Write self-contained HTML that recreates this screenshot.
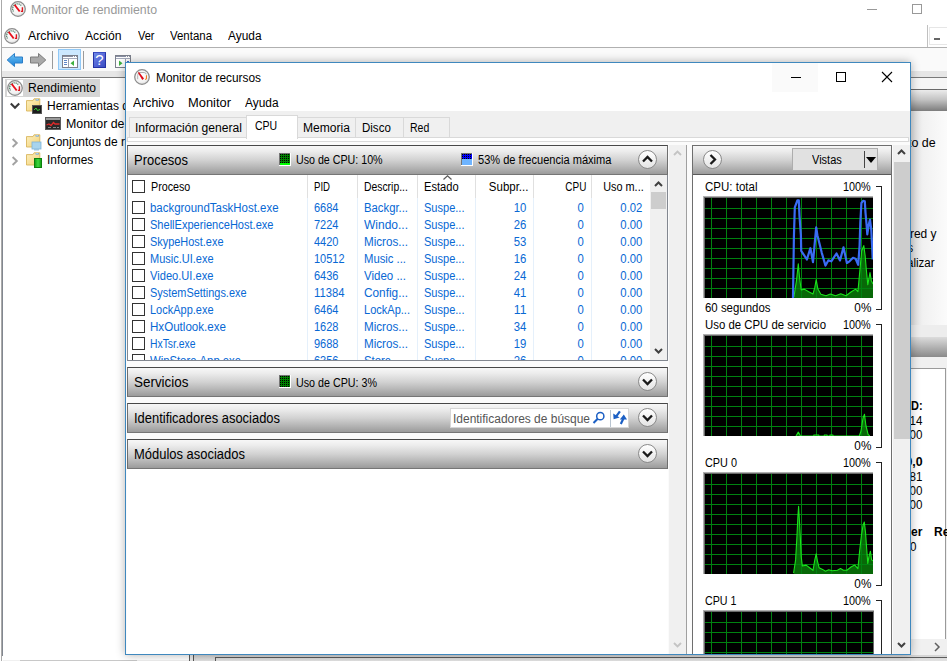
<!DOCTYPE html>
<html><head><meta charset="utf-8">
<style>
*{box-sizing:border-box;margin:0;padding:0}
html,body{width:947px;height:661px;overflow:hidden;background:#fff}
body{font-family:"Liberation Sans",sans-serif;font-size:12px;color:#000;position:relative}
.a{position:absolute}
.t{position:absolute;white-space:pre;line-height:14px;height:14px}
.hd{position:absolute;left:127px;width:541px;height:30px;border:1px solid #6e6e6e;border-top-color:#484848;border-bottom-color:#767676;
 background:linear-gradient(#f7f7f7 0%,#ededed 18%,#d2d2d2 50%,#b4b4b4 78%,#9b9b9b 100%)}
.circ{position:absolute;width:19px;height:19px;border-radius:50%;border:1px solid #8a8a8a;background:linear-gradient(#ffffff,#e4e4e4)}
.cb{position:absolute;left:132px;width:13px;height:13px;border:1px solid #333;background:#fff}
.cs{position:absolute;top:175px;width:1px}
</style></head><body>
<svg width="0" height="0" style="position:absolute"><defs>
<radialGradient id="gg" cx=".45" cy=".4" r=".6"><stop offset="0" stop-color="#fff"/><stop offset=".75" stop-color="#f2f2f2"/><stop offset="1" stop-color="#d8d8d8"/></radialGradient>
<g id="gauge"><circle cx="8" cy="8" r="7.3" fill="url(#gg)" stroke="#8c8c8c" stroke-width="1.25"/><path d="M3.45 10.5 A4.8 4.8 0 0 1 11.6 5" fill="none" stroke="#4f7d66" stroke-width="1.3" stroke-dasharray="1.1 .8"/><path d="M4.55 3.7 L9.7 10.5" stroke="#e8101c" stroke-width="1.9" fill="none"/><path d="M12.4 6.2 V10.4 H10.9" fill="none" stroke="#e0141c" stroke-width="1.4"/></g>
<g id="gaugeB"><circle cx="8" cy="8" r="7.3" fill="url(#gg)" stroke="#8c8c8c" stroke-width="1.25"/><path d="M3.7 10.2 V6.4 Q3.8 3.7 6 3.5 H10.2 Q12 3.6 12.2 5.4" fill="none" stroke="#b0b0b0" stroke-width="1"/><path d="M3.9 3.7 L5.0 3.0 L10.0 9.6 L8.3 10.9 Z" fill="#df0c18"/><path d="M12.5 6.2 L12.4 9.8 L11.2 10.6" fill="none" stroke="#f07a1c" stroke-width="1.1"/></g>
<linearGradient id="fg" x1="0" y1="0" x2="1" y2="1"><stop offset="0" stop-color="#fdf1c0"/><stop offset="1" stop-color="#f2cf74"/></linearGradient>
<linearGradient id="gn" x1="0" y1="0" x2="1" y2="0"><stop offset="0" stop-color="#0f9a0f"/><stop offset=".5" stop-color="#3fd83f"/><stop offset="1" stop-color="#0f9a0f"/></linearGradient>
<g id="folder"><path d="M.5 2.6 H7 L8 .8 H13.8 V13 H.5 Z" fill="url(#fg)" stroke="#d9b65c" stroke-width=".9"/><rect x="9.6" y="1.2" width="3.2" height="1.3" fill="#5a9be0"/><rect x="10.4" y="1.2" width="1.4" height=".7" fill="#e8f2fc"/></g>
<pattern id="dots" width="2" height="2" patternUnits="userSpaceOnUse"><rect x="1" y="1" width="1" height="1" fill="#000"/></pattern>
<linearGradient id="ab" x1="0" y1="0" x2="0" y2="1"><stop offset="0" stop-color="#6fc4f5"/><stop offset="1" stop-color="#1b7fd6"/></linearGradient>
</defs></svg>
<div class="a" style="left:0;top:0;width:947px;height:661px;background:#fff">
<div class="a" style="left:1px;top:0;width:1px;height:661px;background:#aaa"></div>
<svg class="a" style="left:10px;top:1px" width="16" height="16" viewBox="0 0 16 16"><use href="#gauge"/></svg>
<div class="t" style="top:3px;color:#999;left:31.4px;transform:scaleX(1.0266);transform-origin:0 0;">Monitor de rendimiento</div>
<div class="a" style="left:867px;top:9px;width:10px;height:1px;background:#999"></div>
<div class="a" style="left:912px;top:4px;width:10px;height:10px;border:1px solid #999"></div>
<svg class="a" style="left:4px;top:28px" width="16" height="16" viewBox="0 0 16 16"><use href="#gauge"/></svg>
<div class="t" style="top:29px;left:28px;transform:scaleX(1.0246);transform-origin:0 0;">Archivo</div>
<div class="t" style="top:29px;left:85px;transform:scaleX(1.0130);transform-origin:0 0;">Acción</div>
<div class="t" style="top:29px;left:138px;transform:scaleX(0.9159);transform-origin:0 0;">Ver</div>
<div class="t" style="top:29px;left:170px;transform:scaleX(0.9535);transform-origin:0 0;">Ventana</div>
<div class="t" style="top:29px;left:228px;transform:scaleX(0.9908);transform-origin:0 0;">Ayuda</div>
<div class="a" style="left:929px;top:27px;width:19px;height:18px;border:1px solid #e6e6e6;background:#fff"></div>
<div class="a" style="left:934px;top:38px;width:6px;height:2px;background:#666"></div>
<div class="a" style="left:2px;top:47px;width:945px;height:1px;background:#b0b0b0"></div>
<div class="a" style="left:2px;top:48px;width:945px;height:23px;background:#fafafa"></div>
<svg class="a" style="left:6px;top:52px" width="18" height="16" viewBox="0 0 18 16"><path d="M1.2 8 L8.5 1.5 V5 H16.5 V11 H8.5 V14.5 Z" fill="url(#ab)" stroke="#2c7ec8" stroke-width="1"/></svg>
<svg class="a" style="left:29px;top:52px" width="18" height="16" viewBox="0 0 18 16"><path d="M16.8 8 L9.5 1.5 V5 H1.5 V11 H9.5 V14.5 Z" fill="#a9a9a9" stroke="#7d7d7d" stroke-width="1"/></svg>
<div class="a" style="left:52px;top:51px;width:1px;height:18px;background:#9a9a9a"></div>
<div class="a" style="left:58px;top:49px;width:23px;height:21px;border:1px solid #90c8f6;background:#cce8ff"></div>
<svg class="a" style="left:62px;top:55px" width="16" height="13" viewBox="0 0 16 13" shape-rendering="crispEdges"><rect x=".5" y=".5" width="15" height="12" fill="#fff" stroke="#7c808c"/><rect x="1" y="1" width="14" height="1" fill="#8a90a4"/><rect x="11" y="1" width="1" height="1" fill="#fff"/><rect x="13" y="1" width="1" height="1" fill="#fff"/><rect x="1" y="3" width="14" height="1" fill="#a4aabc"/><rect x="2" y="5" width="3" height="1" fill="#5f86c8"/><rect x="2" y="7" width="3" height="1" fill="#5f86c8"/><rect x="2" y="9" width="3" height="1" fill="#5f86c8"/><rect x="6" y="4" width="1" height="8" fill="#9aa0b0"/><path d="M12 5.5 L8.5 8.2 L12 11 Z" fill="#3fb13f" shape-rendering="auto"/></svg>
<div class="a" style="left:83px;top:51px;width:1px;height:18px;background:#9a9a9a"></div>
<div class="a" style="left:93px;top:52px;width:13px;height:16px;background:linear-gradient(135deg,#7088e6,#4f62d4 60%,#3a4cc0);border:1px solid #2432a4;border-top-color:#3a4cc4"></div>
<div class="a" style="left:94px;top:51px;width:11px;height:16px;color:#fff;font-size:15px;line-height:18px;text-align:center">?</div>
<svg class="a" style="left:115px;top:55px" width="16" height="13" viewBox="0 0 16 13" shape-rendering="crispEdges"><rect x=".5" y=".5" width="15" height="12" fill="#fff" stroke="#7c808c"/><rect x="1" y="1" width="14" height="1" fill="#8a90a4"/><rect x="11" y="1" width="1" height="1" fill="#fff"/><rect x="13" y="1" width="1" height="1" fill="#fff"/><rect x="1" y="3" width="14" height="1" fill="#a4aabc"/><rect x="10" y="4" width="1" height="8" fill="#9aa0b0"/><rect x="12" y="6" width="2" height="2" fill="#3a6ad0"/><path d="M4 5.5 L7.5 8.2 L4 11 Z" fill="#3fb13f" shape-rendering="auto"/></svg>
<div class="a" style="left:2px;top:71px;width:945px;height:6px;background:#e6e6e6"></div>
<div class="a" style="left:2px;top:77px;width:945px;height:1px;background:#7a7a7a"></div>
<div class="a" style="left:2px;top:78px;width:1px;height:578px;background:#828790"></div>
<div class="a" style="left:5px;top:79px;width:95px;height:18px;background:#d5d5d5"></div>
<div class="a" style="left:7px;top:80px;width:16px;height:16px;background:#fff"></div><svg class="a" style="left:7px;top:80px" width="16" height="16" viewBox="0 0 16 16"><use href="#gauge"/></svg>
<div class="t" style="top:81px;left:28px;transform:scaleX(1.0093);transform-origin:0 0;">Rendimiento</div>
<svg class="a" style="left:10px;top:102px" width="10" height="8" viewBox="0 0 10 8"><path d="M.8 1.5 L5 5.7 L9.2 1.5" fill="none" stroke="#3a3a3a" stroke-width="2.1"/></svg>
<svg class="a" style="left:26px;top:98px" width="17" height="17" viewBox="0 0 17 17"><use href="#folder"/><rect x="6.5" y="7.5" width="9" height="8" fill="#1c1c1c" stroke="#555"/><path d="M8 12 L10 10 L11.5 12.5 L14 11.5" stroke="#35d035" fill="none" stroke-width="1"/></svg>
<div class="t" style="top:99px;left:47px;">Herramientas d</div>
<svg class="a" style="left:45px;top:117px" width="16" height="13" viewBox="0 0 16 13"><rect x=".5" y=".5" width="15" height="12" fill="#2a2a2a" stroke="#5c5c5c"/><rect x="1" y="1" width="14" height="2" fill="#9a9a9a"/><path d="M1.5 8 L4 7 L6 8.5 L8.5 5.5 L10 7 L14.5 7" stroke="#e02a2a" fill="none" stroke-width="1.3"/><path d="M3 10.5 H6 M8 10.5 H11 M12 10.5 H14" stroke="#888" stroke-width="1"/></svg>
<div class="t" style="top:117px;left:66px;transform:scaleX(1.0317);transform-origin:0 0;">Monitor de</div>
<svg class="a" style="left:11px;top:138px" width="8" height="10" viewBox="0 0 8 10"><path d="M1.6 1 L5.8 5 L1.6 9" fill="none" stroke="#a2a2a2" stroke-width="1.9"/></svg>
<svg class="a" style="left:26px;top:134px" width="17" height="17" viewBox="0 0 17 17"><use href="#folder"/><rect x="6" y="8" width="9" height="7" fill="#a8d4ee" stroke="#7fb3d6" stroke-width=".8"/><rect x="8" y="15" width="5" height="1.5" fill="#9cc6e2"/></svg>
<div class="t" style="top:135px;left:47px;">Conjuntos de r</div>
<svg class="a" style="left:11px;top:156px" width="8" height="10" viewBox="0 0 8 10"><path d="M1.6 1 L5.8 5 L1.6 9" fill="none" stroke="#a2a2a2" stroke-width="1.9"/></svg>
<svg class="a" style="left:26px;top:152px" width="17" height="17" viewBox="0 0 17 17"><use href="#folder"/><rect x="8.5" y="6.5" width="7" height="9" fill="url(#gn)" stroke="#0c800c"/></svg>
<div class="t" style="top:153px;left:47px;transform:scaleX(0.9896);transform-origin:0 0;">Informes</div>
<div class="a" style="left:3px;top:660px;width:186px;height:1px;background:#f0f0f0"></div>
<div class="a" style="left:20px;top:660px;width:117px;height:1px;background:#c8c8c8"></div>
<div class="a" style="left:189px;top:78px;width:1px;height:583px;background:#5a5a5a"></div>
<div class="a" style="left:190px;top:655px;width:3px;height:6px;background:#e8e8e8"></div>
<div class="a" style="left:193px;top:78px;width:1px;height:583px;background:#555"></div>
<div class="a" style="left:194px;top:655px;width:753px;height:6px;background:linear-gradient(#d4d4d4,#e2e2e2)"></div>
<div class="a" style="left:215px;top:657px;width:732px;height:1px;background:#5c5c5c"></div>
<div class="a" style="left:215px;top:657px;width:1px;height:4px;background:#5c5c5c"></div>
<div class="a" style="left:927px;top:25px;width:1px;height:22px;background:#c0c0c0"></div>
<div class="a" style="left:905px;top:78px;width:42px;height:11px;background:#f6f6f6"></div>
<div class="a" style="left:905px;top:89px;width:42px;height:1px;background:#6a6a6a"></div>
<div class="a" style="left:905px;top:90px;width:42px;height:21px;background:linear-gradient(#ebebeb,#c4c4c4 45%,#7c7c7c)"></div>
<div class="a" style="left:905px;top:111px;width:42px;height:214px;background:linear-gradient(90deg,#e0e0e0 0,#e0e0e0 8px,#f1f1f1 18px,#fbfbfb 42px)"></div>
<div class="t" style="top:136px;left:907.5px;transform:scaleX(1.0373);transform-origin:0 0;">to de</div>
<div class="t" style="top:227px;left:910.2px;transform:scaleX(0.9930);transform-origin:0 0;">red y</div>
<div class="t" style="top:241px;left:908.3px;transform:scaleX(0.8500);transform-origin:0 0;">s</div>
<div class="t" style="top:256px;left:906.6px;transform:scaleX(0.9621);transform-origin:0 0;">alizar</div>
<div class="a" style="left:905px;top:325px;width:42px;height:12px;background:#ededed"></div>
<div class="a" style="left:905px;top:337px;width:42px;height:20px;background:linear-gradient(#dcdcdc,#8a8a8a)"></div>
<div class="a" style="left:905px;top:357px;width:42px;height:298px;background:#f0f0f0"></div>
<div class="a" style="left:905px;top:368px;width:41px;height:272px;background:#fff;border:1px solid #9a9a9a;border-bottom:none"></div>
<div class="t" style="top:399px;font-weight:bold;left:911px;transform:scaleX(0.9154);transform-origin:0 0;">D:</div>
<div class="t" style="top:414px;left:908.64px;transform:scaleX(0.9656);transform-origin:100% 0;">14</div>
<div class="t" style="top:428px;left:908.64px;transform:scaleX(0.9656);transform-origin:100% 0;">00</div>
<div class="t" style="top:455px;font-weight:bold;left:905.91px;transform:scaleX(1.0307);transform-origin:100% 0;">0,0</div>
<div class="t" style="top:470px;left:908.64px;transform:scaleX(0.9656);transform-origin:100% 0;">81</div>
<div class="t" style="top:484px;left:908.64px;transform:scaleX(0.9656);transform-origin:100% 0;">00</div>
<div class="t" style="top:498px;left:908.64px;transform:scaleX(0.9656);transform-origin:100% 0;">00</div>
<div class="t" style="top:525px;font-weight:bold;left:911.2px;transform:scaleX(1.0050);transform-origin:0 0;">er</div>
<div class="t" style="top:525px;font-weight:bold;left:934px;">Re</div>
<div class="t" style="top:540px;left:910.2px;transform:scaleX(0.9720);transform-origin:0 0;">0</div>
<div class="a" style="left:906px;top:639px;width:40px;height:15px;background:#f0f0f0"></div>
<svg class="a" style="left:933px;top:642px" width="8" height="10" viewBox="0 0 8 10"><path d="M2 1 L6 5 L2 9" fill="none" stroke="#606060" stroke-width="1.5"/></svg>
</div>
<div class="a" style="left:125px;top:62px;width:786px;height:593px;border:1px solid #3f88be;background:#f0f0f0;box-shadow:0 0 9px rgba(0,0,0,.30)"></div>
<div class="a" style="left:126px;top:63px;width:784px;height:48px;background:#fff"></div>
<svg class="a" style="left:134px;top:69px" width="16" height="16" viewBox="0 0 16 16"><use href="#gaugeB"/></svg>
<div class="t" style="top:71px;left:156px;transform:scaleX(0.9901);transform-origin:0 0;">Monitor de recursos</div>
<div class="a" style="left:772px;top:63px;width:46px;height:29px;background:#fafafa"></div>
<div class="a" style="left:791px;top:77px;width:10px;height:1px;background:#000"></div>
<div class="a" style="left:836px;top:72px;width:10px;height:10px;border:1px solid #000"></div>
<svg class="a" style="left:881px;top:71px" width="12" height="12" viewBox="0 0 12 12"><path d="M1 1 L11 11 M11 1 L1 11" stroke="#000" stroke-width="1.1" fill="none"/></svg>
<div class="t" style="top:96px;left:133px;transform:scaleX(1.0246);transform-origin:0 0;">Archivo</div>
<div class="t" style="top:96px;left:188px;transform:scaleX(1.0746);transform-origin:0 0;">Monitor</div>
<div class="t" style="top:96px;left:245px;transform:scaleX(0.9908);transform-origin:0 0;">Ayuda</div>
<div class="a" style="left:129px;top:117px;width:321px;height:21px;border:1px solid #d9d9d9;background:#f0f0f0"></div>
<div class="a" style="left:355px;top:118px;width:1px;height:19px;background:#d9d9d9"></div>
<div class="a" style="left:403px;top:118px;width:1px;height:19px;background:#d9d9d9"></div>
<div class="a" style="left:126px;top:142px;width:784px;height:512px;background:#fbfbfb"></div>
<div class="a" style="left:127px;top:137px;width:782px;height:5px;border:1px solid #d9d9d9;background:#fff"></div>
<div class="a" style="left:246px;top:115px;width:52px;height:24px;border:1px solid #d9d9d9;border-bottom:none;background:#fff"></div>
<div class="t" style="top:121px;left:135px;transform:scaleX(1.0088);transform-origin:0 0;">Información general</div>
<div class="t" style="top:119px;left:254.5px;transform:scaleX(0.8760);transform-origin:0 0;">CPU</div>
<div class="t" style="top:121px;left:302.5px;transform:scaleX(1.0067);transform-origin:0 0;">Memoria</div>
<div class="t" style="top:121px;left:362px;transform:scaleX(0.9595);transform-origin:0 0;">Disco</div>
<div class="t" style="top:121px;left:410px;transform:scaleX(0.8767);transform-origin:0 0;">Red</div>
<div class="hd" style="top:145px"><div class="circ" style="left:510px;top:4px"><svg class="a" style="left:3px;top:4px" width="11" height="8" viewBox="0 0 11 8"><path d="M1 6.5 L5.5 2 L10 6.5" fill="none" stroke="#1a1a1a" stroke-width="2.3"/></svg></div></div>
<div class="t" style="top:153px;font-size:13px;left:134px;transform:scale(0.9963,1.08);transform-origin:0 79%;line-height:15px;height:15px;">Procesos</div>
<svg class="a" style="left:279px;top:153px" width="12" height="13" viewBox="0 0 12 13" shape-rendering="crispEdges"><rect width="12" height="13" fill="#fff"/><rect width="11" height="12" fill="#757575"/><rect x="1" y="1" width="10" height="11" fill="#008000"/><rect x="1" y="1" width="10" height="9" fill="url(#dots)"/><rect x="1" y="10" width="10" height="2" fill="#00ff00"/></svg>
<div class="t" style="top:153px;left:296.3px;transform:scaleX(0.8892);transform-origin:0 0;">Uso de CPU: 10%</div>
<svg class="a" style="left:461px;top:153px" width="12" height="13" viewBox="0 0 12 13" shape-rendering="crispEdges"><rect width="12" height="13" fill="#fff"/><rect width="11" height="12" fill="#757575"/><rect x="1" y="1" width="10" height="5" fill="#0000ff"/><rect x="1" y="1" width="10" height="5" fill="url(#dots)"/><rect x="1" y="6" width="10" height="6" fill="#6eb4ff"/></svg>
<div class="t" style="top:153px;left:478.4px;transform:scaleX(0.9216);transform-origin:0 0;">53% de frecuencia máxima</div>
<div class="a" style="left:127px;top:175px;width:541px;height:186px;background:#fff;border:1px solid #828790;border-top:none"></div>
<div class="cs" style="left:307px;height:185px;background:#e5f0fb"></div><div class="cs" style="left:307px;height:23px;background:#e0e0e0"></div>
<div class="cs" style="left:357px;height:185px;background:#e5f0fb"></div><div class="cs" style="left:357px;height:23px;background:#e0e0e0"></div>
<div class="cs" style="left:417px;height:185px;background:#e5f0fb"></div><div class="cs" style="left:417px;height:23px;background:#e0e0e0"></div>
<div class="cs" style="left:475px;height:185px;background:#e5f0fb"></div><div class="cs" style="left:475px;height:23px;background:#e0e0e0"></div>
<div class="cs" style="left:533px;height:185px;background:#e5f0fb"></div><div class="cs" style="left:533px;height:23px;background:#e0e0e0"></div>
<div class="cs" style="left:591px;height:185px;background:#e5f0fb"></div><div class="cs" style="left:591px;height:23px;background:#e0e0e0"></div>
<div class="cb" style="top:180px"></div>
<div class="t" style="top:180px;left:151.2px;transform:scaleX(0.8925);transform-origin:0 0;">Proceso</div>
<div class="t" style="top:180px;left:313.8px;transform:scaleX(0.7994);transform-origin:0 0;">PID</div>
<div class="t" style="top:180px;left:363.6px;transform:scaleX(0.8641);transform-origin:0 0;">Descrip...</div>
<div class="t" style="top:180px;left:424px;transform:scaleX(0.9261);transform-origin:0 0;">Estado</div>
<div class="t" style="top:180px;left:486.62px;transform:scaleX(0.9547);transform-origin:100% 0;">Subpr...</div>
<div class="t" style="top:180px;left:560.66px;transform:scaleX(0.8286);transform-origin:100% 0;">CPU</div>
<div class="t" style="top:180px;left:599.33px;transform:scaleX(0.9066);transform-origin:100% 0;">Uso m...</div>
<svg class="a" style="left:443px;top:175px" width="9" height="5" viewBox="0 0 9 5"><path d="M.5 4.5 L4.5 .8 L8.5 4.5" fill="none" stroke="#5a5a5a" stroke-width="1.2"/></svg>
<div class="a" style="left:128px;top:198px;width:522px;height:162px;overflow:hidden"><div class="a" style="left:-128px;top:-198px;color:#0868d4">
<div class="cb" style="top:201px"></div>
<div class="t" style="top:201px;left:150px;transform:scaleX(0.9536);transform-origin:0 0;">backgroundTaskHost.exe</div>
<div class="t" style="top:201px;left:313.7px;transform:scaleX(0.9175);transform-origin:0 0;">6684</div>
<div class="t" style="top:201px;left:363.6px;transform:scaleX(0.9424);transform-origin:0 0;">Backgr...</div>
<div class="t" style="top:201px;left:424px;transform:scaleX(0.9198);transform-origin:0 0;">Suspe...</div>
<div class="t" style="top:201px;left:512.64px;transform:scaleX(0.9432);transform-origin:100% 0;">10</div>
<div class="t" style="top:201px;left:577.31px;transform:scaleX(0.9421);transform-origin:100% 0;">0</div>
<div class="t" style="top:201px;left:619.14px;transform:scaleX(0.9418);transform-origin:100% 0;">0.02</div>
<div class="cb" style="top:218px"></div>
<div class="t" style="top:218px;left:150px;transform:scaleX(0.9211);transform-origin:0 0;">ShellExperienceHost.exe</div>
<div class="t" style="top:218px;left:313.7px;transform:scaleX(0.9175);transform-origin:0 0;">7224</div>
<div class="t" style="top:218px;left:363.6px;transform:scaleX(0.9996);transform-origin:0 0;">Windo...</div>
<div class="t" style="top:218px;left:424px;transform:scaleX(0.9198);transform-origin:0 0;">Suspe...</div>
<div class="t" style="top:218px;left:512.64px;transform:scaleX(0.9432);transform-origin:100% 0;">26</div>
<div class="t" style="top:218px;left:577.31px;transform:scaleX(0.9421);transform-origin:100% 0;">0</div>
<div class="t" style="top:218px;left:619.14px;transform:scaleX(0.9418);transform-origin:100% 0;">0.00</div>
<div class="cb" style="top:235px"></div>
<div class="t" style="top:235px;left:150px;transform:scaleX(0.9106);transform-origin:0 0;">SkypeHost.exe</div>
<div class="t" style="top:235px;left:313.7px;transform:scaleX(0.9175);transform-origin:0 0;">4420</div>
<div class="t" style="top:235px;left:363.6px;transform:scaleX(0.9704);transform-origin:0 0;">Micros...</div>
<div class="t" style="top:235px;left:424px;transform:scaleX(0.9198);transform-origin:0 0;">Suspe...</div>
<div class="t" style="top:235px;left:512.64px;transform:scaleX(0.9432);transform-origin:100% 0;">53</div>
<div class="t" style="top:235px;left:577.31px;transform:scaleX(0.9421);transform-origin:100% 0;">0</div>
<div class="t" style="top:235px;left:619.14px;transform:scaleX(0.9418);transform-origin:100% 0;">0.00</div>
<div class="cb" style="top:252px"></div>
<div class="t" style="top:252px;left:150px;transform:scaleX(0.9155);transform-origin:0 0;">Music.UI.exe</div>
<div class="t" style="top:252px;left:313.7px;transform:scaleX(0.9139);transform-origin:0 0;">10512</div>
<div class="t" style="top:252px;left:363.6px;transform:scaleX(0.9402);transform-origin:0 0;">Music ...</div>
<div class="t" style="top:252px;left:424px;transform:scaleX(0.9198);transform-origin:0 0;">Suspe...</div>
<div class="t" style="top:252px;left:512.64px;transform:scaleX(0.9432);transform-origin:100% 0;">16</div>
<div class="t" style="top:252px;left:577.31px;transform:scaleX(0.9421);transform-origin:100% 0;">0</div>
<div class="t" style="top:252px;left:619.14px;transform:scaleX(0.9418);transform-origin:100% 0;">0.00</div>
<div class="cb" style="top:269px"></div>
<div class="t" style="top:269px;left:150px;transform:scaleX(0.9270);transform-origin:0 0;">Video.UI.exe</div>
<div class="t" style="top:269px;left:313.7px;transform:scaleX(0.9175);transform-origin:0 0;">6436</div>
<div class="t" style="top:269px;left:363.6px;transform:scaleX(0.9586);transform-origin:0 0;">Video ...</div>
<div class="t" style="top:269px;left:424px;transform:scaleX(0.9198);transform-origin:0 0;">Suspe...</div>
<div class="t" style="top:269px;left:512.64px;transform:scaleX(0.9432);transform-origin:100% 0;">24</div>
<div class="t" style="top:269px;left:577.31px;transform:scaleX(0.9421);transform-origin:100% 0;">0</div>
<div class="t" style="top:269px;left:619.14px;transform:scaleX(0.9418);transform-origin:100% 0;">0.00</div>
<div class="cb" style="top:286px"></div>
<div class="t" style="top:286px;left:150px;transform:scaleX(0.9098);transform-origin:0 0;">SystemSettings.exe</div>
<div class="t" style="top:286px;left:313.7px;transform:scaleX(0.9389);transform-origin:0 0;">11384</div>
<div class="t" style="top:286px;left:363.6px;transform:scaleX(0.9843);transform-origin:0 0;">Config...</div>
<div class="t" style="top:286px;left:424px;transform:scaleX(0.9198);transform-origin:0 0;">Suspe...</div>
<div class="t" style="top:286px;left:512.64px;transform:scaleX(0.9432);transform-origin:100% 0;">41</div>
<div class="t" style="top:286px;left:577.31px;transform:scaleX(0.9421);transform-origin:100% 0;">0</div>
<div class="t" style="top:286px;left:619.14px;transform:scaleX(0.9418);transform-origin:100% 0;">0.00</div>
<div class="cb" style="top:303px"></div>
<div class="t" style="top:303px;left:150px;transform:scaleX(0.9151);transform-origin:0 0;">LockApp.exe</div>
<div class="t" style="top:303px;left:313.7px;transform:scaleX(0.9175);transform-origin:0 0;">6464</div>
<div class="t" style="top:303px;left:363.6px;transform:scaleX(0.9194);transform-origin:0 0;">LockAp...</div>
<div class="t" style="top:303px;left:424px;transform:scaleX(0.9198);transform-origin:0 0;">Suspe...</div>
<div class="t" style="top:303px;left:513.53px;transform:scaleX(1.0105);transform-origin:100% 0;">11</div>
<div class="t" style="top:303px;left:577.31px;transform:scaleX(0.9421);transform-origin:100% 0;">0</div>
<div class="t" style="top:303px;left:619.14px;transform:scaleX(0.9418);transform-origin:100% 0;">0.00</div>
<div class="cb" style="top:320px"></div>
<div class="t" style="top:320px;left:150px;transform:scaleX(0.9657);transform-origin:0 0;">HxOutlook.exe</div>
<div class="t" style="top:320px;left:313.7px;transform:scaleX(0.9175);transform-origin:0 0;">1628</div>
<div class="t" style="top:320px;left:363.6px;transform:scaleX(0.9704);transform-origin:0 0;">Micros...</div>
<div class="t" style="top:320px;left:424px;transform:scaleX(0.9198);transform-origin:0 0;">Suspe...</div>
<div class="t" style="top:320px;left:512.64px;transform:scaleX(0.9432);transform-origin:100% 0;">34</div>
<div class="t" style="top:320px;left:577.31px;transform:scaleX(0.9421);transform-origin:100% 0;">0</div>
<div class="t" style="top:320px;left:619.14px;transform:scaleX(0.9418);transform-origin:100% 0;">0.00</div>
<div class="cb" style="top:337px"></div>
<div class="t" style="top:337px;left:150px;transform:scaleX(0.8636);transform-origin:0 0;">HxTsr.exe</div>
<div class="t" style="top:337px;left:313.7px;transform:scaleX(0.9175);transform-origin:0 0;">9688</div>
<div class="t" style="top:337px;left:363.6px;transform:scaleX(0.9704);transform-origin:0 0;">Micros...</div>
<div class="t" style="top:337px;left:424px;transform:scaleX(0.9198);transform-origin:0 0;">Suspe...</div>
<div class="t" style="top:337px;left:512.64px;transform:scaleX(0.9432);transform-origin:100% 0;">19</div>
<div class="t" style="top:337px;left:577.31px;transform:scaleX(0.9421);transform-origin:100% 0;">0</div>
<div class="t" style="top:337px;left:619.14px;transform:scaleX(0.9418);transform-origin:100% 0;">0.00</div>
<div class="cb" style="top:354px"></div>
<div class="t" style="top:354px;left:150px;transform:scaleX(0.9409);transform-origin:0 0;">WinStore.App.exe</div>
<div class="t" style="top:354px;left:313.7px;transform:scaleX(0.9175);transform-origin:0 0;">6356</div>
<div class="t" style="top:354px;left:363.6px;transform:scaleX(0.9412);transform-origin:0 0;">Store</div>
<div class="t" style="top:354px;left:424px;transform:scaleX(0.9198);transform-origin:0 0;">Suspe...</div>
<div class="t" style="top:354px;left:512.64px;transform:scaleX(0.9432);transform-origin:100% 0;">26</div>
<div class="t" style="top:354px;left:577.31px;transform:scaleX(0.9421);transform-origin:100% 0;">0</div>
<div class="t" style="top:354px;left:619.14px;transform:scaleX(0.9418);transform-origin:100% 0;">0.00</div>
</div></div>
<div class="a" style="left:650px;top:175px;width:17px;height:185px;background:#f0f0f0"></div>
<svg class="a" style="left:654px;top:181px" width="9" height="6" viewBox="0 0 9 6"><path d="M1 5 L4.5 1.5 L8 5" fill="none" stroke="#404040" stroke-width="2"/></svg>
<div class="a" style="left:651px;top:192px;width:15px;height:17px;background:#cdcdcd"></div>
<svg class="a" style="left:654px;top:348px" width="9" height="6" viewBox="0 0 9 6"><path d="M1 1 L4.5 4.5 L8 1" fill="none" stroke="#404040" stroke-width="2"/></svg>
<div class="hd" style="top:367px"><div class="circ" style="left:510px;top:4px"><svg class="a" style="left:3px;top:5px" width="11" height="8" viewBox="0 0 11 8"><path d="M1 1.5 L5.5 6 L10 1.5" fill="none" stroke="#1a1a1a" stroke-width="2.3"/></svg></div></div>
<div class="t" style="top:375px;font-size:13px;left:134px;transform:scale(1.0332,1.08);transform-origin:0 79%;line-height:15px;height:15px;">Servicios</div>
<svg class="a" style="left:279px;top:375px" width="12" height="13" viewBox="0 0 12 13" shape-rendering="crispEdges"><rect width="12" height="13" fill="#fff"/><rect width="11" height="12" fill="#757575"/><rect x="1" y="1" width="10" height="11" fill="#008000"/><rect x="1" y="1" width="10" height="11" fill="url(#dots)"/></svg>
<div class="t" style="top:376px;left:296.3px;transform:scaleX(0.8930);transform-origin:0 0;">Uso de CPU: 3%</div>
<div class="hd" style="top:403px"><div class="circ" style="left:510px;top:4px"><svg class="a" style="left:3px;top:5px" width="11" height="8" viewBox="0 0 11 8"><path d="M1 1.5 L5.5 6 L10 1.5" fill="none" stroke="#1a1a1a" stroke-width="2.3"/></svg></div></div>
<div class="t" style="top:411px;font-size:13px;left:134px;transform:scale(0.9952,1.08);transform-origin:0 79%;line-height:15px;height:15px;">Identificadores asociados</div>
<div class="a" style="left:450px;top:408px;width:179px;height:20px;background:#fff;border:1px solid #d6d6d6"></div>
<div class="t" style="top:412px;color:#555;left:453px;transform:scaleX(0.9968);transform-origin:0 0;">Identificadores de búsque</div>
<svg class="a" style="left:592px;top:411px" width="14" height="14" viewBox="0 0 14 14"><circle cx="8.3" cy="5.2" r="3.6" fill="none" stroke="#1b5fc4" stroke-width="1.5"/><path d="M5.7 7.8 L1.5 12" stroke="#1b5fc4" stroke-width="2" /></svg>
<div class="a" style="left:610px;top:410px;width:1px;height:17px;background:#b8c4d0"></div>
<svg class="a" style="left:612px;top:410px" width="16" height="15" viewBox="612 410 16 15"><path d="M619.9 411.3 L616.4 416.2" stroke="#1b5fc4" stroke-width="2.2" fill="none"/><path d="M613.2 413.6 L619.6 417.6 L613.6 419.2 Z" fill="#1b5fc4"/><path d="M620.8 424 L623.4 418.6" stroke="#1b5fc4" stroke-width="2.2" fill="none"/><path d="M619.8 419.6 L627 419.6 L623.8 414.4 Z" fill="#1b5fc4"/></svg>
<div class="hd" style="top:439px"><div class="circ" style="left:510px;top:4px"><svg class="a" style="left:3px;top:5px" width="11" height="8" viewBox="0 0 11 8"><path d="M1 1.5 L5.5 6 L10 1.5" fill="none" stroke="#1a1a1a" stroke-width="2.3"/></svg></div></div>
<div class="t" style="top:447px;font-size:13px;left:134px;transform:scale(0.9973,1.08);transform-origin:0 79%;line-height:15px;height:15px;">Módulos asociados</div>
<div class="a" style="left:127px;top:469px;width:541px;height:186px;background:#fff"></div>
<div class="a" style="left:669px;top:145px;width:17px;height:510px;background:#f0f0f0"></div>
<svg class="a" style="left:673px;top:150px" width="9" height="6" viewBox="0 0 9 6"><path d="M1 5 L4.5 1.5 L8 5" fill="none" stroke="#c4c4c4" stroke-width="1.9"/></svg>
<svg class="a" style="left:673px;top:642px" width="9" height="6" viewBox="0 0 9 6"><path d="M1 1 L4.5 4.5 L8 1" fill="none" stroke="#c4c4c4" stroke-width="1.9"/></svg>
<div class="a" style="left:686px;top:145px;width:1px;height:510px;background:#a0a0a0"></div>
<div class="a" style="left:692px;top:145px;width:200px;height:510px;background:#fff;border:1px solid #6e6e6e;border-bottom:none"></div>
<div class="a" style="left:693px;top:146px;width:198px;height:29px;background:linear-gradient(#f7f7f7 0%,#ededed 18%,#d2d2d2 50%,#b4b4b4 78%,#9b9b9b 100%);border-bottom:1px solid #5a5a5a"></div>
<div class="circ" style="left:703px;top:150px"><svg class="a" style="left:5px;top:3px" width="8" height="11" viewBox="0 0 8 11"><path d="M1.5 1 L6 5.5 L1.5 10" fill="none" stroke="#1a1a1a" stroke-width="2.3"/></svg></div>
<div class="a" style="left:792px;top:148px;width:86px;height:23px;background:#e1e1e1;border:1px solid #adadad"></div>
<div class="t" style="top:153px;left:812.2px;transform:scaleX(0.9178);transform-origin:0 0;">Vistas</div>
<div class="a" style="left:864px;top:151px;width:1px;height:17px;background:#444"></div>
<svg class="a" style="left:866px;top:157px" width="10" height="6" viewBox="0 0 10 6"><path d="M0 0 H10 L5 6 Z" fill="#000"/></svg>
<div class="a" style="left:893px;top:145px;width:17px;height:510px;background:#f0f0f0"></div>
<svg class="a" style="left:897px;top:149px" width="9" height="6" viewBox="0 0 9 6"><path d="M1 5 L4.5 1.5 L8 5" fill="none" stroke="#404040" stroke-width="2"/></svg>
<div class="a" style="left:894px;top:162px;width:16px;height:277px;background:#cdcdcd"></div>
<svg class="a" style="left:897px;top:642px" width="9" height="6" viewBox="0 0 9 6"><path d="M1 1 L4.5 4.5 L8 1" fill="none" stroke="#404040" stroke-width="2"/></svg>
<div class="t" style="top:180px;left:705.3px;transform:scaleX(0.9600);transform-origin:0 0;">CPU: total</div>
<div class="t" style="top:180px;left:840.10px;transform:scaleX(0.9054);transform-origin:100% 0;">100%</div>
<div class="a" style="left:876px;top:186px;width:6px;height:1px;background:#222"></div><div class="a" style="left:881px;top:186px;width:1px;height:124px;background:#222"></div><div class="a" style="left:876px;top:309px;width:6px;height:1px;background:#222"></div>
<div class="a" style="left:703px;top:196px;width:171px;height:103px;background:#b0b0b0"></div><div class="a" style="left:704px;top:197px;width:170px;height:102px;background:#6a6a6a"></div><div class="a" style="left:703px;top:298px;width:171px;height:1px;background:#fff"></div><div class="a" style="left:873px;top:196px;width:1px;height:103px;background:#fff"></div><svg class="a" style="left:705px;top:198px" width="168" height="100" viewBox="705 198 168 100"><rect x="705" y="198" width="168" height="100" fill="#000"/><polygon points="793.9,298.0 793.9,297.0 796.5,280.4 798.3,263.9 799.5,277.0 801.2,290.0 804.3,289.1 808.7,291.7 813.0,294.0 814.8,287.4 816.2,279.5 817.9,289.1 820.9,294.3 826.0,295.7 830.4,294.0 835.6,295.7 840.8,293.8 846.0,295.7 851.3,291.7 855.6,289.1 857.9,291.7 859.6,273.4 861.7,250.8 863.8,245.6 865.2,256.0 866.2,268.2 867.8,284.7 870.0,272.6 871.3,280.4 873.0,283.9 873.0,298.0" fill="#086808"/><path d="M711.5 198V298M726.5 198V298M741.5 198V298M756.5 198V298M771.5 198V298M786.5 198V298M801.5 198V298M816.5 198V298M831.5 198V298M846.5 198V298M861.5 198V298M705 208.5H873M705 218.5H873M705 228.5H873M705 238.5H873M705 248.5H873M705 258.5H873M705 268.5H873M705 278.5H873M705 288.5H873" stroke="#008210" stroke-width="1" fill="none" shape-rendering="crispEdges"/><polyline points="793.9,297.0 796.5,280.4 798.3,263.9 799.5,277.0 801.2,290.0 804.3,289.1 808.7,291.7 813.0,294.0 814.8,287.4 816.2,279.5 817.9,289.1 820.9,294.3 826.0,295.7 830.4,294.0 835.6,295.7 840.8,293.8 846.0,295.7 851.3,291.7 855.6,289.1 857.9,291.7 859.6,273.4 861.7,250.8 863.8,245.6 865.2,256.0 866.2,268.2 867.8,284.7 870.0,272.6 871.3,280.4 873.0,283.9" fill="none" stroke="#1be21b" stroke-width="1.1" stroke-linejoin="round"/><polyline points="793.0,298.0 793.9,236.9 794.8,207.4 797.4,200.4 798.8,200.4 799.5,216.0 800.9,235.2 801.2,250.8 806.9,259.5 810.4,248.2 813.0,262.1 816.2,227.4 817.4,235.2 821.7,252.6 825.5,265.6 828.3,260.4 831.3,261.3 836.5,253.5 840.0,260.4 843.5,247.4 846.9,263.0 849.5,261.3 853.0,257.8 855.6,258.7 858.2,264.8 859.6,245.6 860.3,223.0 861.4,203.0 863.1,200.8 864.8,201.3 865.5,212.6 866.6,224.8 867.3,234.3 868.7,224.8 870.0,219.6 871.3,230.0 872.1,245.6 872.7,259.5" fill="none" stroke="#3a6cf4" stroke-width="2.2" stroke-linejoin="round"/></svg>
<div class="t" style="top:301px;left:853.96px;transform:scaleX(0.9802);transform-origin:100% 0;">0%</div>
<div class="t" style="top:318px;left:705.3px;transform:scaleX(0.9498);transform-origin:0 0;">Uso de CPU de servicio</div>
<div class="t" style="top:318px;left:840.10px;transform:scaleX(0.9054);transform-origin:100% 0;">100%</div>
<div class="a" style="left:876px;top:324px;width:6px;height:1px;background:#222"></div><div class="a" style="left:881px;top:324px;width:1px;height:124px;background:#222"></div><div class="a" style="left:876px;top:447px;width:6px;height:1px;background:#222"></div>
<div class="a" style="left:703px;top:334px;width:171px;height:103px;background:#b0b0b0"></div><div class="a" style="left:704px;top:335px;width:170px;height:102px;background:#6a6a6a"></div><div class="a" style="left:703px;top:436px;width:171px;height:1px;background:#fff"></div><div class="a" style="left:873px;top:334px;width:1px;height:103px;background:#fff"></div><svg class="a" style="left:705px;top:336px" width="168" height="100" viewBox="705 336 168 100"><rect x="705" y="336" width="168" height="100" fill="#000"/><polygon points="796.0,436.0 796.0,436.0 798.3,432.1 800.5,436.0 813.8,436.0 813.8,435.0 818.8,435.0 818.8,436.0 824.3,436.0 824.3,435.0 827.1,435.0 827.1,436.0 829.9,436.0 829.9,435.0 833.0,435.0 833.0,436.0 859.3,436.0 861.0,431.0 863.1,417.7 864.5,414.2 865.9,425.5 868.1,434.3 869.8,436.0 869.8,436.0" fill="#086808"/><path d="M711.5 336V436M726.5 336V436M741.5 336V436M756.5 336V436M771.5 336V436M786.5 336V436M801.5 336V436M816.5 336V436M831.5 336V436M846.5 336V436M861.5 336V436M705 346.5H873M705 356.5H873M705 366.5H873M705 376.5H873M705 386.5H873M705 396.5H873M705 406.5H873M705 416.5H873M705 426.5H873" stroke="#008210" stroke-width="1" fill="none" shape-rendering="crispEdges"/><polyline points="796.0,436.0 798.3,432.1 800.5,436.0 813.8,436.0 813.8,435.0 818.8,435.0 818.8,436.0 824.3,436.0 824.3,435.0 827.1,435.0 827.1,436.0 829.9,436.0 829.9,435.0 833.0,435.0 833.0,436.0 859.3,436.0 861.0,431.0 863.1,417.7 864.5,414.2 865.9,425.5 868.1,434.3 869.8,436.0" fill="none" stroke="#1be21b" stroke-width="1.1" stroke-linejoin="round"/></svg>
<div class="t" style="top:439px;left:853.96px;transform:scaleX(0.9802);transform-origin:100% 0;">0%</div>
<div class="t" style="top:456px;left:705.3px;transform:scaleX(0.9054);transform-origin:0 0;">CPU 0</div>
<div class="t" style="top:456px;left:840.10px;transform:scaleX(0.9054);transform-origin:100% 0;">100%</div>
<div class="a" style="left:876px;top:462px;width:6px;height:1px;background:#222"></div><div class="a" style="left:881px;top:462px;width:1px;height:124px;background:#222"></div><div class="a" style="left:876px;top:585px;width:6px;height:1px;background:#222"></div>
<div class="a" style="left:703px;top:472px;width:171px;height:103px;background:#b0b0b0"></div><div class="a" style="left:704px;top:473px;width:170px;height:102px;background:#6a6a6a"></div><div class="a" style="left:703px;top:574px;width:171px;height:1px;background:#fff"></div><div class="a" style="left:873px;top:472px;width:1px;height:103px;background:#fff"></div><svg class="a" style="left:705px;top:474px" width="168" height="100" viewBox="705 474 168 100"><rect x="705" y="474" width="168" height="100" fill="#000"/><polygon points="793.6,574.0 793.6,573.0 795.6,559.9 796.9,537.3 797.9,516.4 798.6,506.3 799.3,518.2 800.3,537.3 801.2,556.4 802.3,566.0 806.1,565.1 809.6,567.7 813.0,570.3 814.8,559.9 816.2,553.8 817.4,560.8 819.1,567.7 822.6,569.4 825.5,571.2 828.7,569.8 832.2,570.8 837.4,570.3 840.5,568.6 843.5,570.3 846.9,570.3 851.3,566.8 854.8,565.1 857.9,568.6 859.6,551.2 861.4,535.5 863.1,525.1 864.3,522.0 865.5,532.1 866.6,547.7 867.8,563.4 869.0,556.4 870.4,551.2 871.6,559.9 873.0,560.8 873.0,574.0" fill="#086808"/><path d="M711.5 474V574M726.5 474V574M741.5 474V574M756.5 474V574M771.5 474V574M786.5 474V574M801.5 474V574M816.5 474V574M831.5 474V574M846.5 474V574M861.5 474V574M705 484.5H873M705 494.5H873M705 504.5H873M705 514.5H873M705 524.5H873M705 534.5H873M705 544.5H873M705 554.5H873M705 564.5H873" stroke="#008210" stroke-width="1" fill="none" shape-rendering="crispEdges"/><polyline points="793.6,573.0 795.6,559.9 796.9,537.3 797.9,516.4 798.6,506.3 799.3,518.2 800.3,537.3 801.2,556.4 802.3,566.0 806.1,565.1 809.6,567.7 813.0,570.3 814.8,559.9 816.2,553.8 817.4,560.8 819.1,567.7 822.6,569.4 825.5,571.2 828.7,569.8 832.2,570.8 837.4,570.3 840.5,568.6 843.5,570.3 846.9,570.3 851.3,566.8 854.8,565.1 857.9,568.6 859.6,551.2 861.4,535.5 863.1,525.1 864.3,522.0 865.5,532.1 866.6,547.7 867.8,563.4 869.0,556.4 870.4,551.2 871.6,559.9 873.0,560.8" fill="none" stroke="#1be21b" stroke-width="1.1" stroke-linejoin="round"/></svg>
<div class="t" style="top:577px;left:853.96px;transform:scaleX(0.9802);transform-origin:100% 0;">0%</div>
<div class="t" style="top:594px;left:705.3px;transform:scaleX(0.8912);transform-origin:0 0;">CPU 1</div>
<div class="t" style="top:594px;left:840.10px;transform:scaleX(0.9054);transform-origin:100% 0;">100%</div>
<div class="a" style="left:876px;top:600px;width:6px;height:1px;background:#222"></div><div class="a" style="left:881px;top:600px;width:1px;height:54px;background:#222"></div>
<div class="a" style="left:703px;top:610px;width:171px;height:45px;background:#b0b0b0"></div><div class="a" style="left:704px;top:611px;width:170px;height:44px;background:#6a6a6a"></div><svg class="a" style="left:705px;top:612px" width="168" height="42" viewBox="705 612 168 42"><rect x="705" y="612" width="168" height="42" fill="#000"/><path d="M711.5 612V654M726.5 612V654M741.5 612V654M756.5 612V654M771.5 612V654M786.5 612V654M801.5 612V654M816.5 612V654M831.5 612V654M846.5 612V654M861.5 612V654M705 622.5H873M705 632.5H873M705 642.5H873M705 652.5H873" stroke="#008210" stroke-width="1" fill="none" shape-rendering="crispEdges"/></svg>
<div class="t" style="top:301px;left:705.3px;transform:scaleX(0.9529);transform-origin:0 0;">60 segundos</div>
<div class="a" style="left:125px;top:654px;width:786px;height:1px;background:#3f88be"></div>
</body></html>
